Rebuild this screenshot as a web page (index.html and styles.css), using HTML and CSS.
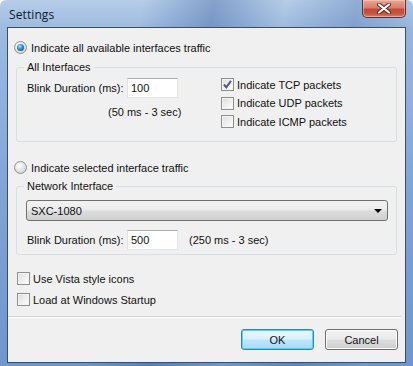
FILE: index.html
```html
<!DOCTYPE html>
<html>
<head>
<meta charset="utf-8">
<link rel="stylesheet" href="styles.css">
</head>
<body>
<div class="window">
  <div class="titlebar">
    <span class="title">Settings</span>
    <div class="close"><svg width="14" height="11" viewBox="0 0 14 11"><path d="M2 1.5 L12 9.5 M12 1.5 L2 9.5" stroke="#5a2320" stroke-width="4" stroke-linecap="round"/><path d="M2 1.5 L12 9.5 M12 1.5 L2 9.5" stroke="#fff" stroke-width="2.2" stroke-linecap="round"/></svg></div>
  </div>
  <div class="client">
    <label class="opt radio-row first">
      <span class="radio on"></span><span>Indicate all available interfaces traffic</span>
    </label>
    <fieldset class="group g1">
      <legend>All Interfaces</legend>
      <div class="g1-body">
        <div class="g1-left">
          <div class="field-row">
            <span class="lbl">Blink Duration (ms):</span>
            <span class="input">100</span>
          </div>
          <div class="range r1">(50 ms - 3 sec)</div>
        </div>
        <div class="g1-right">
          <label class="opt chk-row"><span class="check on"><svg width="11" height="11" viewBox="0 0 11 11"><path d="M2 5.5 L4.3 8.3 L9 1.8" fill="none" stroke="#4d5a8c" stroke-width="2"/></svg></span><span>Indicate TCP packets</span></label>
          <label class="opt chk-row"><span class="check"></span><span>Indicate UDP packets</span></label>
          <label class="opt chk-row"><span class="check"></span><span>Indicate ICMP packets</span></label>
        </div>
      </div>
    </fieldset>
    <label class="opt radio-row second">
      <span class="radio"></span><span>Indicate selected interface traffic</span>
    </label>
    <fieldset class="group g2">
      <legend>Network Interface</legend>
      <div class="combo"><span>SXC-1080</span><span class="arrow"></span></div>
      <div class="field-row r2">
        <span class="lbl">Blink Duration (ms):</span>
        <span class="input">500</span>
        <span class="range">(250 ms - 3 sec)</span>
      </div>
    </fieldset>
    <div class="bottom-checks">
      <label class="opt chk-row b"><span class="check"></span><span>Use Vista style icons</span></label>
      <label class="opt chk-row b"><span class="check"></span><span>Load at Windows Startup</span></label>
    </div>
    <div class="sep"></div>
    <div class="buttons">
      <span class="btn default">OK</span>
      <span class="btn">Cancel</span>
    </div>
  </div>
</div>
</body>
</html>
```
FILE: styles.css
```css
html, body {
  margin: 0;
  padding: 0;
}
body {
  width: 413px;
  height: 366px;
  overflow: hidden;
  font-family: "Liberation Sans", Arial, sans-serif;
  font-size: 11px;
  color: #111;
}
.window {
  width: 413px;
  height: 366px;
  box-sizing: border-box;
  padding: 0 7px 3px 7px;
  display: flex;
  flex-direction: column;
  background:
    linear-gradient(100deg, rgba(255,255,255,0) 30%, rgba(40,80,150,0.35) 45%, rgba(255,255,255,0) 60%, rgba(40,80,150,0.25) 75%, rgba(255,255,255,0) 90%),
    linear-gradient(180deg, #b7cde8 0px, #9dbbe0 28px, #7ea3d4 200px, #6f97cd 366px);
  border-radius: 6px 6px 0 0;
}
.titlebar {
  height: 27px;
  flex: none;
  display: flex;
  align-items: flex-start;
  justify-content: space-between;
}
.title {
  font-family: "Open Sans", "Noto Sans", sans-serif;
  font-size: 12px;
  color: #0f1a2a;
  margin: 6px 0 0 2px;
  letter-spacing: 0.1px;
}
.close {
  width: 44px;
  height: 18px;
  box-sizing: border-box;
  border: 1px solid #6a2c28;
  border-top: none;
  border-radius: 0 0 5px 5px;
  background: linear-gradient(180deg, #e8a896 0%, #d67f6c 45%, #c24a36 55%, #c8553e 80%, #d8806a 100%);
  display: flex;
  align-items: center;
  justify-content: center;
  box-shadow: inset 0 0 0 1px rgba(255,220,210,0.45);
}
.client {
  flex: 1;
  border: 1px solid #3b4d68;
  background: #f0f0f0;
  display: flex;
  flex-direction: column;
}
.opt {
  display: flex;
  align-items: center;
  height: 13px;
}
.radio {
  width: 13px;
  height: 13px;
  box-sizing: border-box;
  border-radius: 50%;
  border: 1px solid #8c9097;
  background: radial-gradient(circle at 40% 35%, #ffffff 0%, #e6e6e6 45%, #c8c8c8 100%);
  margin-right: 4px;
  position: relative;
  flex: none;
}
.radio.on::after {
  content: "";
  position: absolute;
  left: 2px;
  top: 2px;
  width: 7px;
  height: 7px;
  border-radius: 50%;
  background: radial-gradient(circle at 40% 35%, #b2e8ff 0%, #3aa0d8 35%, #145c95 75%, #0d3d68 100%);
}
.radio-row.first {
  margin: 13px 0 0 6px;
}
.radio-row.second {
  margin: 19px 0 0 6px;
}
.group {
  margin: 0 8px 0 8px;
  border: 1px solid #d5dfe5;
  border-radius: 3px;
  padding: 0;
  min-width: 0;
}
.group legend {
  padding: 0 3px;
  margin-left: 7px;
  line-height: 13px;
}
.g1 {
  margin-top: 7px;
  height: 81px;
  box-sizing: border-box;
}
.g1-body {
  display: flex;
}
.g1-left {
  width: 194px;
  padding-left: 10px;
  padding-top: 4px;
}
.field-row {
  display: flex;
  align-items: center;
}
.lbl {
  width: 100px;
  flex: none;
}
.input {
  width: 51px;
  height: 20px;
  box-sizing: border-box;
  background: #fff;
  border: 1px solid #e2e3ea;
  border-top-color: #abadb3;
  padding: 3px 0 0 3px;
  line-height: 13px;
}
.range.r1 {
  margin: 8px 0 0 81px;
}
.g1-right {
  display: flex;
  flex-direction: column;
  gap: 5.5px;
  padding-top: 4px;
}
.check {
  width: 13px;
  height: 13px;
  box-sizing: border-box;
  border: 1px solid #8e8f8f;
  background: linear-gradient(135deg, #dcdcdc 0%, #f2f2f2 60%, #ffffff 100%);
  box-shadow: inset 0 0 0 1px #f4f4f4;
  margin-right: 3px;
  flex: none;
  display: flex;
  align-items: center;
  justify-content: center;
}
.check svg {
  display: block;
}
.g2 {
  margin-top: 6px;
  height: 75px;
  box-sizing: border-box;
}
.combo {
  margin: 7px 8px 0 9px;
  height: 21px;
  box-sizing: border-box;
  border: 1px solid #707070;
  border-radius: 3px;
  background: linear-gradient(180deg, #f2f2f2 0%, #ebebeb 48%, #dddddd 52%, #cfcfcf 100%);
  display: flex;
  align-items: center;
  justify-content: space-between;
  padding: 0 4px 0 4px;
}
.arrow {
  width: 0;
  height: 0;
  border-left: 4px solid transparent;
  border-right: 4px solid transparent;
  border-top: 4px solid #000;
  margin-right: 1px;
}
.field-row.r2 {
  margin: 9px 0 0 10px;
}
.field-row.r2 .range {
  margin-left: 11px;
}
.bottom-checks {
  display: flex;
  flex-direction: column;
  gap: 8px;
  margin: 17px 0 0 9px;
}
.sep {
  margin: 10px 4px 0 0;
  height: 1px;
  background: #d2d2d2;
  border-bottom: 1px solid #ffffff;
}
.buttons {
  display: flex;
  justify-content: flex-end;
  gap: 11px;
  margin: 11px 7px 0 0;
}
.btn {
  width: 73px;
  height: 21px;
  box-sizing: border-box;
  border: 1px solid #707070;
  border-radius: 3px;
  background: linear-gradient(180deg, #f2f2f2 0%, #ebebeb 48%, #dddddd 52%, #cfcfcf 100%);
  box-shadow: inset 0 0 0 1px #fcfcfc;
  display: flex;
  align-items: center;
  justify-content: center;
}
.btn.default {
  border-color: #3c7fb1;
  background: linear-gradient(180deg, #eaf6fd 0%, #d9f0fc 48%, #bee6fd 52%, #a7d9f5 100%);
  box-shadow: inset 0 0 0 1px #48d8fb;
}
```
